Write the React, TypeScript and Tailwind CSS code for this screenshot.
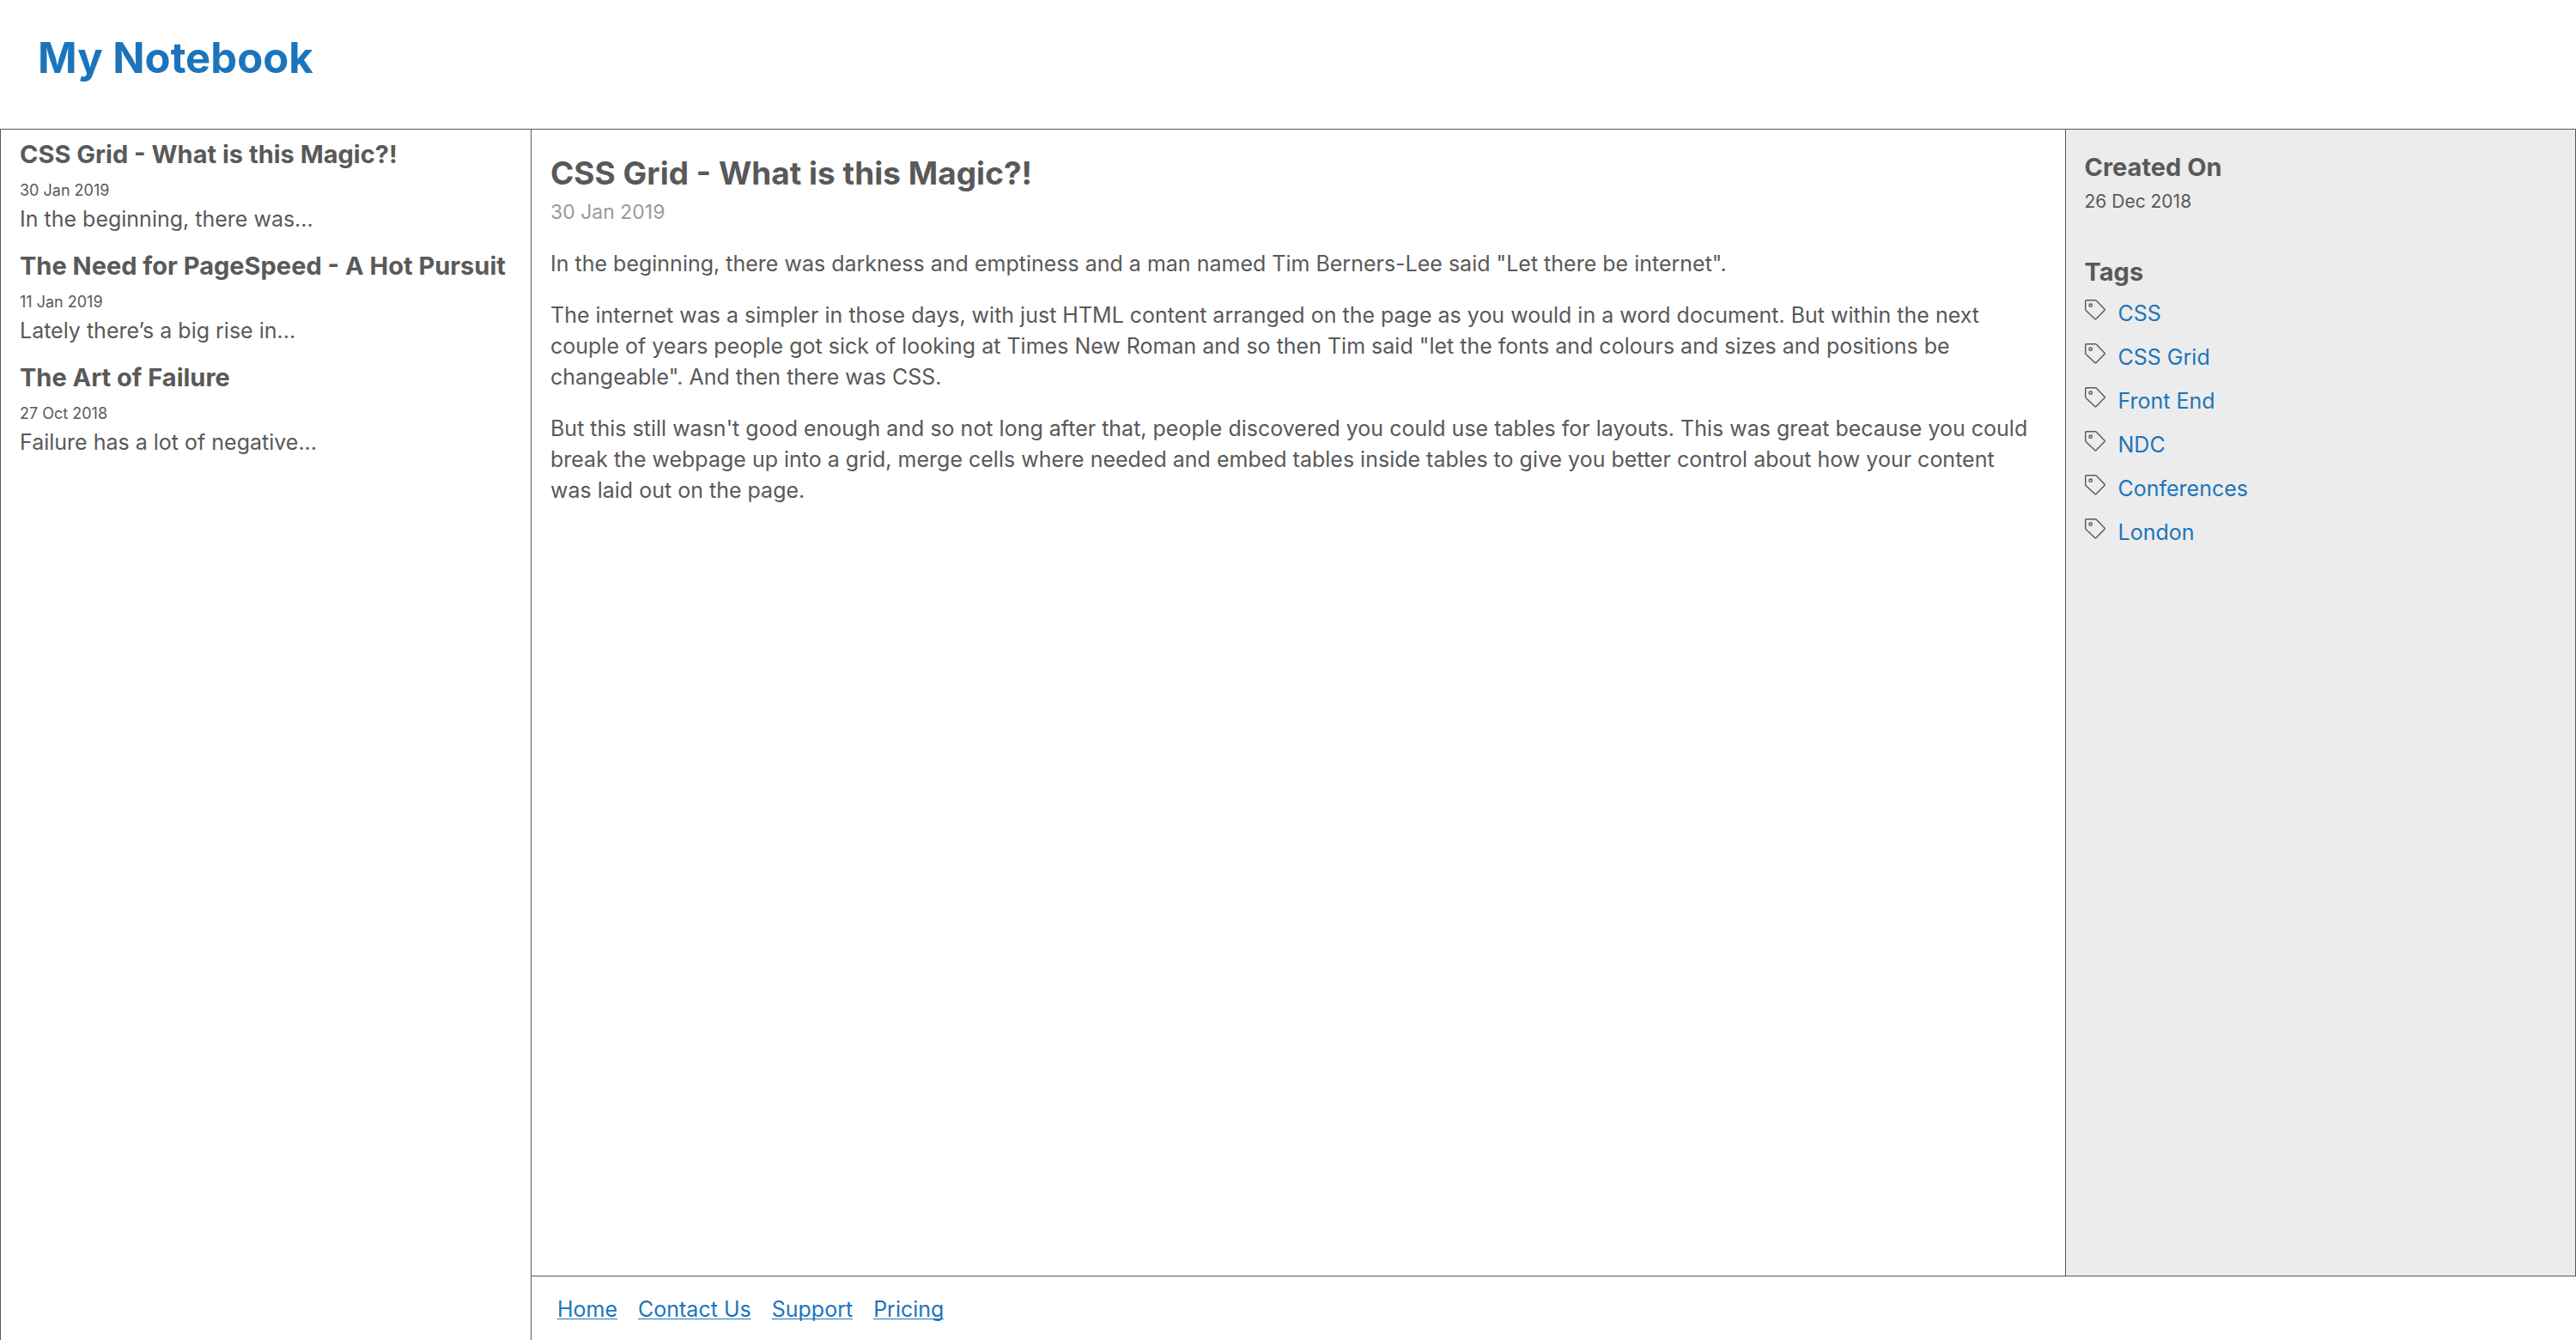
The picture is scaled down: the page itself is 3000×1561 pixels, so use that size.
type Note = { title: string; date: string; excerpt: string };

const notes: Note[] = [
  { title: "CSS Grid - What is this Magic?!", date: "30 Jan 2019", excerpt: "In the beginning, there was..." },
  { title: "The Need for PageSpeed - A Hot Pursuit", date: "11 Jan 2019", excerpt: "Lately there’s a big rise in..." },
  { title: "The Art of Failure", date: "27 Oct 2018", excerpt: "Failure has a lot of negative..." },
];

const paragraphs = [
  'In the beginning, there was darkness and emptiness and a man named Tim Berners-Lee said "Let there be internet".',
  'The internet was a simpler in those days, with just HTML content arranged on the page as you would in a word document. But within the next couple of years people got sick of looking at Times New Roman and so then Tim said "let the fonts and colours and sizes and positions be changeable". And then there was CSS.',
  "But this still wasn't good enough and so not long after that, people discovered you could use tables for layouts. This was great because you could break the webpage up into a grid, merge cells where needed and embed tables inside tables to give you better control about how your content was laid out on the page.",
];

const tags = ["CSS", "CSS Grid", "Front End", "NDC", "Conferences", "London"];
const links = ["Home", "Contact Us", "Support", "Pricing"];

function TagIcon() {
  return (
    <svg
      viewBox="0 0 24 24"
      className="mt-0.5 size-6 shrink-0"
      fill="none"
      stroke="currentColor"
      strokeWidth="1.4"
      strokeLinejoin="round"
      aria-hidden="true"
    >
      <path d="M.7 1.7a1 1 0 0 1 1-1h10.5a1.500 1.500 0 0 1 1 .4l9.700 9.900a1 1 0 0 1 0 1.400L13.100 22.500a1 1 0 0 1-1.400 0L1.100 12.400a1.500 1.500 0 0 1-.4-1z" />
      <circle cx="6.700" cy="6.700" r="1.700" />
    </svg>
  );
}

export default function App() {
  return (
    <div className="grid min-h-screen grid-cols-[618px_3fr_1fr] grid-rows-[auto_1fr_auto] bg-white font-['Inter',sans-serif] text-[25px] leading-9 text-[#595959]">
      <header className="col-span-3 px-11 pt-8 pb-[46px]">
        <h1 className="text-[49px] leading-[72px] font-bold text-[#1c75bc]">My Notebook</h1>
      </header>

      <nav aria-label="Notes" className="row-span-2 border-t border-l border-[#595959] px-[22px] pt-2">
        <ul className="flex flex-col gap-4">
          {notes.map((note) => (
            <li key={note.title}>
              <h3 className="text-[29px] leading-[42px] font-bold whitespace-nowrap">{note.title}</h3>
              <p className="mt-1.5 text-lg leading-[30px]">{note.date}</p>
              <p>{note.excerpt}</p>
            </li>
          ))}
        </ul>
      </nav>

      <main className="border-t border-l border-[#595959] pt-6 pr-8 pl-[22px]">
        <h2 className="text-[37px] leading-[54px] font-bold">{notes[0].title}</h2>
        <p className="text-[23px] text-[#999999]">{notes[0].date}</p>
        {paragraphs.map((text) => (
          <p key={text} className="mt-6">
            {text}
          </p>
        ))}
      </main>

      <aside className="border-x border-t border-[#595959] bg-[#ececec] px-[22px] pt-[26px]">
        <h3 className="text-[29px] font-bold">Created On</h3>
        <p className="mt-1 text-[21px]">26 Dec 2018</p>
        <h3 className="mt-[46px] text-[29px] font-bold">Tags</h3>
        <ul className="mt-3 flex flex-col gap-[15px]">
          {tags.map((tag) => (
            <li key={tag} className="flex items-start gap-[15px]">
              <TagIcon />
              <a href="#" className="text-[#1c75bc]">
                {tag}
              </a>
            </li>
          ))}
        </ul>
      </aside>

      <footer className="col-span-2 border-t border-l border-[#595959] pt-5 pb-[18px] pl-[30px]">
        <ul className="flex gap-6">
          {links.map((link) => (
            <li key={link}>
              <a
                href="#"
                className="text-[#1c75bc] underline decoration-1 underline-offset-2 [text-decoration-skip-ink:none]"
              >
                {link}
              </a>
            </li>
          ))}
        </ul>
      </footer>
    </div>
  );
}
